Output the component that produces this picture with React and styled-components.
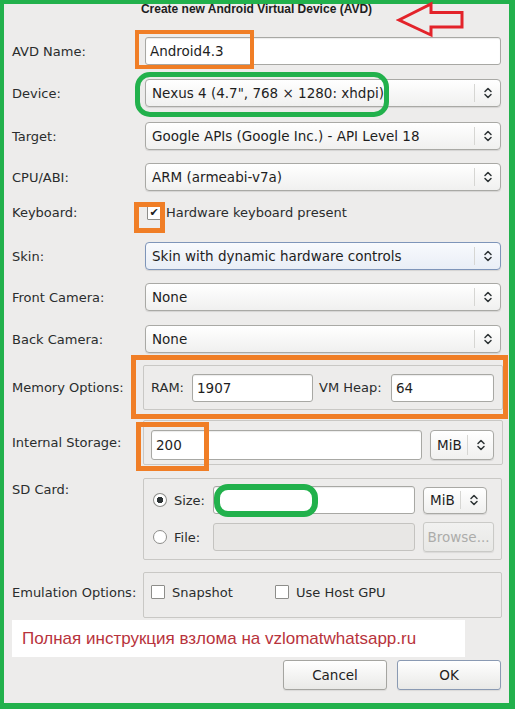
import styled, { createGlobalStyle } from "styled-components"

const GlobalStyle = createGlobalStyle`
  html, body { margin: 0; padding: 0; background: #ffffff; }
  * { box-sizing: border-box; }
`

function Chevrons(){
  return (
    <svg width="10" height="14" viewBox="0 0 10 14">
      <path d="M2 5.5 L5 2.5 L8 5.5 M2 8.5 L5 11.5 L8 8.5" fill="none" stroke="#2e3436" strokeWidth="1.5" strokeLinecap="round" strokeLinejoin="round" />
    </svg>
  )
}

function Select({ value, focus, width, height }){
  return (
    <Combo $focus={focus} $w={width} $h={height}>
      <ComboText>{value}</ComboText>
      <ComboArrow><Chevrons /></ComboArrow>
    </Combo>
  )
}

export default function App(){
  return (
    <Page>
      <GlobalStyle />
      <Frame>
        <Header>
          <Title>Create new Android Virtual Device (AVD)</Title>
        </Header>
        <Form>
          <Row>
            <Label>AVD Name:</Label>
            <Entry>Android4.3</Entry>
          </Row>
          <Row $mt={14}>
            <Label>Device:</Label>
            <Select value={'Nexus 4 (4.7", 768 × 1280: xhdpi)'} />
          </Row>
          <Row $mt={15}>
            <Label>Target:</Label>
            <Select value="Google APIs (Google Inc.) - API Level 18" />
          </Row>
          <Row $mt={13}>
            <Label>CPU/ABI:</Label>
            <Select value="ARM (armeabi-v7a)" />
          </Row>
          <Row $mt={14} $h={23} $top>
            <Label>Keyboard:</Label>
            <Check $checked>Hardware keyboard present</Check>
          </Row>
          <Row $mt={14}>
            <Label>Skin:</Label>
            <Select focus value="Skin with dynamic hardware controls" />
          </Row>
          <Row $mt={13}>
            <Label>Front Camera:</Label>
            <Select value="None" />
          </Row>
          <Row $mt={14}>
            <Label>Back Camera:</Label>
            <Select value="None" />
          </Row>
          <Row $mt={12} $h={45}>
            <Label $narrow>Memory Options:</Label>
            <Group $pt={8} $gap={0}>
              <Inline $w={41}>RAM:</Inline>
              <Entry $w={121}>1907</Entry>
              <Inline $w={72} $ml={6}>VM Heap:</Inline>
              <Entry $w={103}>64</Entry>
            </Group>
          </Row>
          <Row $mt={10} $h={45}>
            <Label $narrow>Internal Storage:</Label>
            <Group $pt={9}>
              <Entry $w={271} $h={30}>200</Entry>
              <Select value="MiB" width={64} height={30} />
            </Group>
          </Row>
          <Row $mt={13} $h={82} $top>
            <Label $narrow $pt={4}>SD Card:</Label>
            <SdGroup>
              <Radio $on>Size:</Radio>
              <Entry $w={202} />
              <Select value="MiB" width={64} height={27} />
              <Radio>File:</Radio>
              <Entry $w={202} $disabled />
              <Button $disabled $w={71} $h={30}>Browse...</Button>
            </SdGroup>
          </Row>
          <Row $mt={12} $h={46}>
            <Label $narrow $pb={6}>Emulation Options:</Label>
            <Group $pt={0} $pb={6} $gap={0}>
              <Check $w={124}>Snapshot</Check>
              <Check>Use Host GPU</Check>
            </Group>
          </Row>
          <Note>Полная инструкция взлома на vzlomatwhatsapp.ru</Note>
          <Buttons>
            <Button $w={104} $h={30}>Cancel</Button>
            <Button $w={104} $h={30} $default>OK</Button>
          </Buttons>
        </Form>
      </Frame>

      {/* annotations drawn over the dialog */}
      <Mark $x={135} $y={30} $w={119} $h={39} $b={4} />
      <Mark $x={135} $y={72} $w={254} $h={45} $b={5} $r={15} $green />
      <Mark $x={134} $y={202} $w={31} $h={31} $b={5} />
      <Mark $x={131} $y={355} $w={377} $h={64} $b={5} />
      <Mark $x={136} $y={422} $w={73} $h={49} $b={5} />
      <Mark $x={214} $y={484} $w={104} $h={33} $b={6} $r={14} $green $fill />
      <Arrow width="72" height="40" viewBox="0 0 72 40">
        <path d="M3 20 L35 4 L35 12.5 L66 12.5 L66 27 L35 27 L35 35 Z" fill="none" stroke="#e3232a" strokeWidth="3" strokeLinejoin="miter" />
      </Arrow>
    </Page>
  )
}

const Page = styled.div`
  position: relative;
  width: 515px;
  height: 709px;
  overflow: hidden;
`
const Frame = styled.div`
  width: 515px;
  height: 709px;
  border-style: solid;
  border-color: #22b14c;
  border-width: 4px 6px 6px 4px;
  background: #edeceb;
  padding: 0 8px;
  font-family: "DejaVu Sans", sans-serif;
  font-size: 13px;
  color: #2a2c2d;
`
const Header = styled.div`
  height: 33px;
  display: flex;
  justify-content: center;
`
const Title = styled.div`
  margin-top: -2px;
  font-family: "Liberation Sans", sans-serif;
  font-weight: 700;
  font-size: 12px;
  line-height: 14px;
  color: #1e1e1e;
`
const Form = styled.div`
  display: flex;
  flex-direction: column;
`
const Row = styled.div`
  display: flex;
  align-items: ${p => p.$top ? "flex-start" : "center"};
  height: ${p => p.$h || 28}px;
  margin-top: ${p => p.$mt || 0}px;
`
const Label = styled.div`
  width: ${p => p.$narrow ? 131 : 133}px;
  flex-shrink: 0;
  padding-top: ${p => p.$pt || 0}px;
  padding-bottom: ${p => p.$pb || 0}px;
`
const Entry = styled.div`
  flex: ${p => p.$w ? "none" : 1};
  width: ${p => p.$w ? p.$w + "px" : "auto"};
  height: ${p => p.$h || 28}px;
  display: flex;
  align-items: center;
  padding-left: 4px;
  background: ${p => p.$disabled ? "#e8e7e5" : "#ffffff"};
  border: 1px solid ${p => p.$disabled ? "#c4c3c0" : "#a8a8a4"};
  border-radius: 3px;
  box-shadow: ${p => p.$disabled ? "none" : "inset 0 1px 1px rgba(0,0,0,0.08)"};
  font-size: 13.5px;
  color: #1e1e1e;
`
const Combo = styled.div`
  flex: ${p => p.$w ? "none" : 1};
  width: ${p => p.$w ? p.$w + "px" : "auto"};
  height: ${p => p.$h || 28}px;
  display: flex;
  align-items: center;
  border: 1px solid ${p => p.$focus ? "#7e95b9" : "#a9a9a5"};
  border-radius: 4px;
  background: ${p => p.$focus
    ? "linear-gradient(#f8fafd, #e9eef6)"
    : "linear-gradient(#ffffff, #f0f0ef)"};
  box-shadow: 0 1px 1px rgba(0,0,0,0.1);
  font-size: 13.5px;
  color: #1e1e1e;
`
const ComboText = styled.div`
  flex: 1;
  padding-left: 6px;
  white-space: nowrap;
  overflow: hidden;
`
const ComboArrow = styled.div`
  width: 26px;
  height: 70%;
  display: flex;
  align-items: center;
  justify-content: center;
  border-left: 1px solid #d6d6d3;
`
const Group = styled.div`
  flex: 1;
  height: 100%;
  margin-right: -1px;
  display: flex;
  align-items: ${p => p.$pb ? "center" : "flex-start"};
  gap: ${p => p.$gap ?? 8}px;
  padding: ${p => p.$pt}px 8px ${p => p.$pb || 0}px 7px;
  border: 1px solid #c9c8c5;
  border-radius: 2px;
`
const Inline = styled.div`
  flex-shrink: 0;
  width: ${p => p.$w}px;
  margin-left: ${p => p.$ml || 0}px;
  line-height: 28px;
  white-space: nowrap;
`
const SdGroup = styled.div`
  flex: 1;
  height: 100%;
  margin-right: -1px;
  display: grid;
  grid-template-columns: 52px 202px auto;
  grid-template-rows: 28px 30px;
  row-gap: 8px;
  column-gap: 8px;
  align-items: center;
  padding: 7px 7px 0 9px;
  border: 1px solid #c9c8c5;
  border-radius: 2px;
`
const Radio = styled.div`
  display: flex;
  align-items: center;
  gap: 7px;
  &::before {
    content: "";
    width: 12px;
    height: 12px;
    border-radius: 50%;
    border: 1px solid #8d8d8a;
    background: ${p => p.$on
      ? "radial-gradient(circle, #2e3436 0 3px, #ffffff 3.5px)"
      : "#ffffff"};
  }
`
const Check = styled.div`
  width: ${p => p.$w ? p.$w + "px" : "auto"};
  display: flex;
  align-items: center;
  gap: ${p => p.$checked ? 5 : 7}px;
  padding-left: ${p => p.$checked ? 2 : 0}px;
  &::before {
    content: "${p => p.$checked ? "✔" : ""}";
    width: 12px;
    height: 12px;
    display: flex;
    align-items: center;
    justify-content: center;
    border: 1px solid #8d8d8a;
    border-radius: 1px;
    background: #ffffff;
    font-size: 11px;
    line-height: 1;
    color: #1e1e1e;
  }
`
const Button = styled.div`
  width: ${p => p.$w}px;
  height: ${p => p.$h}px;
  display: flex;
  align-items: center;
  justify-content: center;
  border: 1px solid ${p => p.$disabled ? "#cacac7" : p.$default ? "#8a9ab3" : "#a5a5a1"};
  border-radius: 3px;
  background: ${p => p.$disabled
    ? "linear-gradient(#f1f1f0, #e8e8e6)"
    : "linear-gradient(#ffffff, #e9e9e7)"};
  box-shadow: 0 1px 1px rgba(0,0,0,0.08);
  color: ${p => p.$disabled ? "#acacaa" : "#1e1e1e"};
  font-size: 13.5px;
`
const Note = styled.div`
  width: 453px;
  height: 37px;
  margin-top: 2px;
  padding-left: 10px;
  display: flex;
  align-items: center;
  background: #ffffff;
  font-family: "Liberation Sans", Arial, sans-serif;
  font-size: 17px;
  color: #b8333c;
`
const Buttons = styled.div`
  margin-top: 3px;
  display: flex;
  justify-content: flex-end;
  gap: 10px;
`
const Mark = styled.div`
  position: absolute;
  left: ${p => p.$x}px;
  top: ${p => p.$y}px;
  width: ${p => p.$w}px;
  height: ${p => p.$h}px;
  border: ${p => p.$b}px solid ${p => p.$green ? "#22b14c" : "#f07e26"};
  border-radius: ${p => p.$r || 0}px;
  background: ${p => p.$fill ? "#ffffff" : "transparent"};
`
const Arrow = styled.svg`
  position: absolute;
  left: 396px;
  top: 0;
`
